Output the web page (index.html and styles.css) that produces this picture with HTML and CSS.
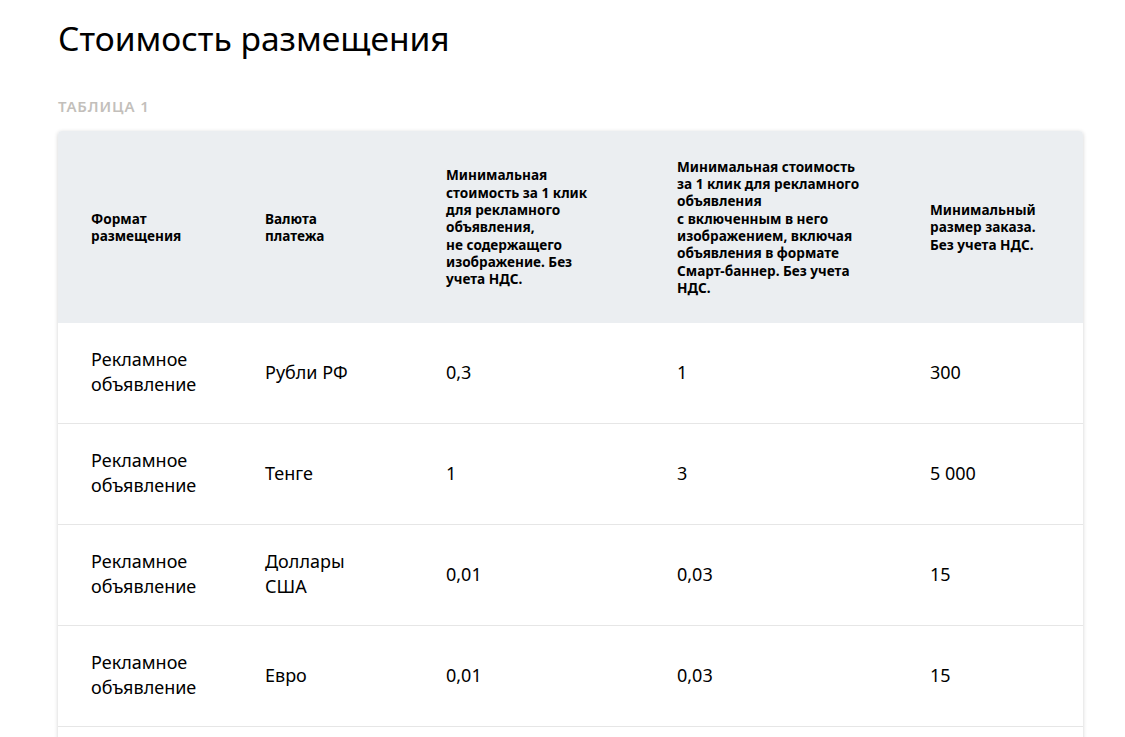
FILE: index.html
```html
<!DOCTYPE html>
<html lang="ru">
<head>
<meta charset="utf-8">
<title>Стоимость размещения</title>
<link rel="stylesheet" href="styles.css">
</head>
<body>
<main class="page">
  <h1 class="title">Стоимость размещения</h1>
  <div class="caption">Таблица 1</div>
  <div class="card">
    <table class="price-table">
      <colgroup>
        <col class="c1"><col class="c2"><col class="c3"><col class="c4"><col class="c5">
      </colgroup>
      <thead>
        <tr>
          <th>Формат<br>размещения</th>
          <th>Валюта<br>платежа</th>
          <th>Минимальная<br>стоимость за 1 клик<br>для рекламного<br>объявления,<br>не содержащего<br>изображение. Без<br>учета НДС.</th>
          <th>Минимальная стоимость<br>за 1 клик для рекламного<br>объявления<br>с включенным в него<br>изображением, включая<br>объявления в формате<br>Смарт-баннер. Без учета<br>НДС.</th>
          <th>Минимальный<br>размер заказа.<br>Без учета НДС.</th>
        </tr>
      </thead>
      <tbody>
        <tr>
          <td>Рекламное<br>объявление</td>
          <td>Рубли РФ</td>
          <td>0,3</td>
          <td>1</td>
          <td>300</td>
        </tr>
        <tr>
          <td>Рекламное<br>объявление</td>
          <td>Тенге</td>
          <td>1</td>
          <td>3</td>
          <td>5 000</td>
        </tr>
        <tr>
          <td>Рекламное<br>объявление</td>
          <td>Доллары<br>США</td>
          <td>0,01</td>
          <td>0,03</td>
          <td>15</td>
        </tr>
        <tr>
          <td>Рекламное<br>объявление</td>
          <td>Евро</td>
          <td>0,01</td>
          <td>0,03</td>
          <td>15</td>
        </tr>
        <tr>
          <td>Рекламное<br>объявление</td>
          <td>Гривны</td>
          <td>0,1</td>
          <td>0,3</td>
          <td>100</td>
        </tr>
      </tbody>
    </table>
  </div>
</main>
</body>
</html>
```

FILE: styles.css
```css
html, body {
  margin: 0;
  padding: 0;
  background: #ffffff;
}

body {
  font-family: "Noto Sans", "Open Sans", Arial, sans-serif;
  color: #000;
}

.page {
  padding: 14px 42px 0 58px;
}

.title {
  margin: 0;
  font-size: 33.6px;
  font-weight: 400;
  line-height: 48px;
  letter-spacing: 0;
}

.caption {
  margin-top: 35px;
  font-size: 15px;
  font-weight: 600;
  line-height: 18px;
  letter-spacing: 0.9px;
  text-transform: uppercase;
  color: #c3bfbb;
}

.card {
  margin-top: 16px;
  width: 1025px;
  border-radius: 4px;
  background: #fff;
  box-shadow: 0 1px 4px rgba(0, 0, 0, 0.18);
  overflow: hidden;
}

.price-table {
  width: 100%;
  border-collapse: collapse;
  table-layout: fixed;
}

.c1 { width: 174px; }
.c2 { width: 181px; }
.c3 { width: 231px; }
.c4 { width: 253px; }
.c5 { width: 186px; }

.price-table th {
  background: #ebeef1;
  text-align: left;
  vertical-align: middle;
  font-size: 13.6px;
  font-weight: 700;
  line-height: 17.3px;
  padding: 26px 20px 26px 33px;
  white-space: nowrap;
  height: 140px;
}

.price-table td {
  font-size: 18px;
  font-weight: 400;
  line-height: 25px;
  padding: 24px 20px 26px 33px;
  height: 50px;
  vertical-align: middle;
  border-bottom: 1px solid #e6e6e6;
  white-space: nowrap;
}
```
